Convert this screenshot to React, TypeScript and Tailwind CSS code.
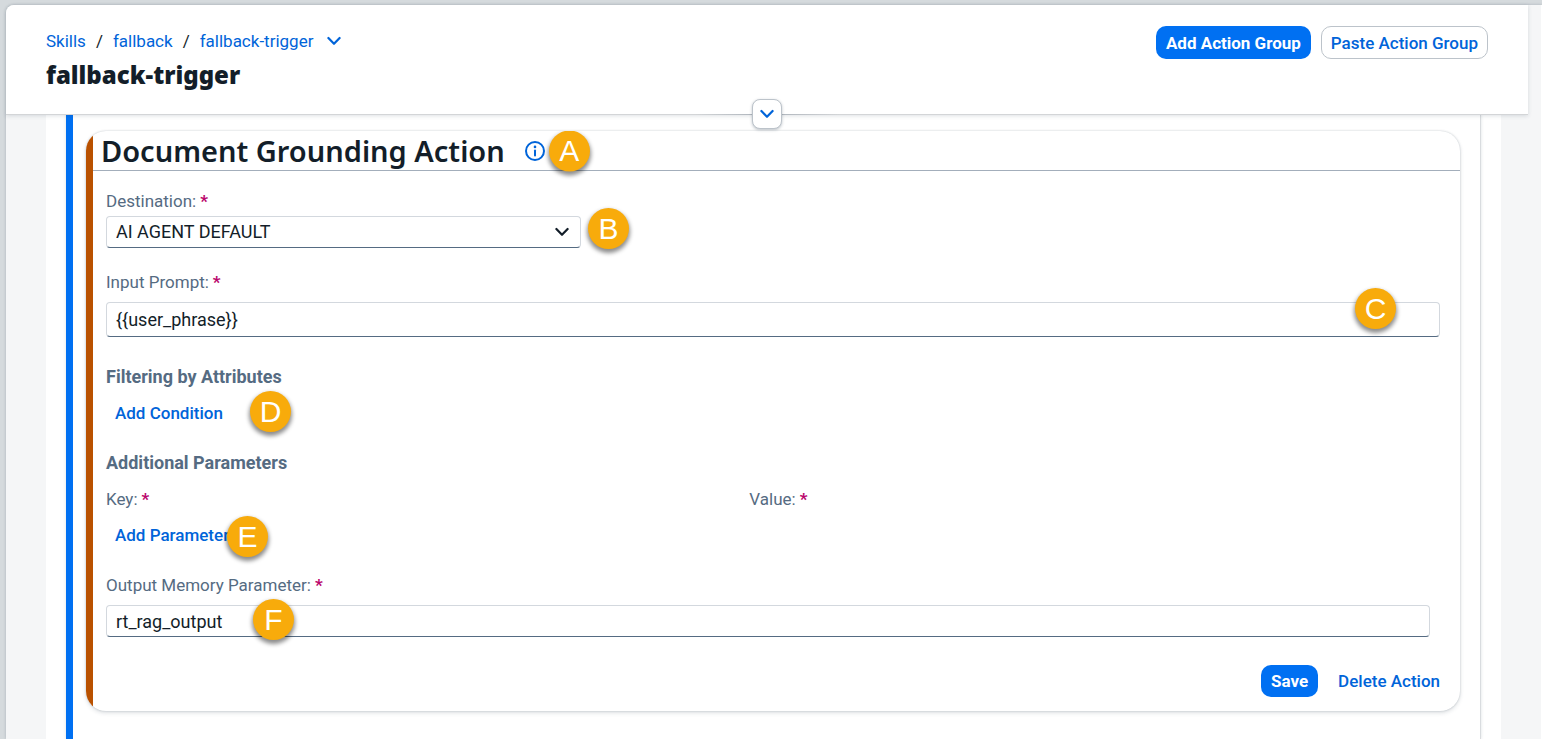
import { useState } from 'react'
import type { ReactNode } from 'react'
import clsx from 'clsx'

// Chevron shared by the breadcrumb, the header toggle and the select
function Chevron({ className }: { className?: string }) {
  return (
    <svg
      viewBox="0 0 14 14"
      className={clsx('h-3.5 w-3.5', className)}
      fill="none"
      stroke="currentColor"
      strokeWidth="2.2"
      strokeLinecap="round"
      strokeLinejoin="round"
      aria-hidden="true"
    >
      <path d="M1.4 4 L7 9.8 L12.6 4" />
    </svg>
  )
}

function InfoIcon() {
  return (
    <svg viewBox="0 0 20 20" className="h-5 w-5" fill="none" aria-hidden="true">
      <circle cx="10" cy="10" r="9" stroke="currentColor" strokeWidth="2" />
      <circle cx="10" cy="5.9" r="1.3" fill="currentColor" />
      <path d="M10 9.4 V14.6" stroke="currentColor" strokeWidth="2" strokeLinecap="round" />
    </svg>
  )
}

// Orange callout that floats over the form
function Callout({ letter, className }: { letter: string; className: string }) {
  return (
    <span
      className={clsx(
        'pointer-events-none absolute z-10 flex h-[41px] w-[41px] items-center justify-center rounded-full bg-[#f8ab0b] font-["Liberation_Sans",sans-serif] text-[30px] leading-none font-normal text-white shadow-[0_3px_4px_1px_rgba(0,0,0,0.45)]',
        className,
      )}
    >
      {letter}
    </span>
  )
}

function Label({ htmlFor, children }: { htmlFor?: string; children: ReactNode }) {
  const Tag = htmlFor ? 'label' : 'div'
  return (
    <Tag htmlFor={htmlFor} className="flex h-6 items-center gap-1 text-[17px] leading-6 text-[#556b82]">
      {children}
      <span className="font-bold text-[#ba066c]">*</span>
    </Tag>
  )
}

const field =
  'w-full rounded border border-[#d3d8de] border-b-[#556b82] bg-white px-[9px] text-[#131e29] outline-none'
const textButton = 'h-8 px-[9px] text-[17px] font-medium text-[#0064d9]'

function Header() {
  return (
    <header className="relative z-20 mr-[13px] flex items-start justify-between rounded-tl-lg border-b border-[#d3d5d7] bg-white pt-[21px] pr-10 pb-[23px] pl-10 shadow-[0_1px_4px_rgba(34,54,73,0.15)]">
      <div className="pt-[3px]">
        <nav
          className="flex h-6 items-center gap-2.5 text-[17px] text-[#0064d9]"
          aria-label="Breadcrumb"
        >
          <a href="#skills">Skills</a>
          <span className="text-[#131e29]">/</span>
          <a href="#fallback">fallback</a>
          <span className="text-[#131e29]">/</span>
          <a href="#fallback-trigger">fallback-trigger</a>
          <button type="button" className="ml-1" aria-label="More pages">
            <Chevron />
          </button>
        </nav>
        <h1 className='mt-1.5 font-["Noto_Sans",sans-serif] text-2xl font-black text-[#131e29]'>
          fallback-trigger
        </h1>
      </div>

      <div className="flex gap-2.5 text-[17px]">
        <button
          type="button"
          className="h-[33px] rounded-[10px] bg-[#0070f2] px-2.5 font-bold text-white"
        >
          Add Action Group
        </button>
        <button
          type="button"
          className="h-[33px] rounded-[10px] border border-[#bcc3ca] bg-white px-[9px] font-medium text-[#0064d9]"
        >
          Paste Action Group
        </button>
      </div>

      {/* Collapse toggle sits on the bottom edge */}
      <div className="absolute -bottom-px left-1/2 h-px w-36 -translate-x-1/2 bg-gradient-to-r from-transparent via-[#a9b0b8] to-transparent" />
      <button
        type="button"
        aria-label="Expand header"
        className="absolute -bottom-[15px] left-1/2 flex h-[30px] w-[30px] -translate-x-1/2 items-center justify-center rounded-lg border border-[#bcc3ca] bg-white text-[#0064d9] shadow-[0_1px_3px_rgba(34,54,73,0.3)]"
      >
        <Chevron />
      </button>
    </header>
  )
}

function ActionCard() {
  const [destination, setDestination] = useState('AI AGENT DEFAULT')
  const [prompt, setPrompt] = useState('{{user_phrase}}')
  const [output, setOutput] = useState('rt_rag_output')

  return (
    <section className="flex overflow-hidden rounded-[20px] bg-white shadow-[0_0_2px_rgba(34,54,73,0.25),0_2px_4px_rgba(34,54,73,0.15)]">
      <div className="w-[7px] shrink-0 bg-[#b95100]" />
      <div className="min-w-0 flex-1">
        <div className="flex h-10 items-center gap-5 border-b border-[#a3aebb] pl-2">
          <h2 className='font-["Noto_Sans",sans-serif] text-[29px] leading-none font-semibold text-[#131e29]'>
            Document Grounding Action
          </h2>
          <div className="relative flex">
            <button type="button" className="text-[#0064d9]" aria-label="About this action">
              <InfoIcon />
            </button>
            <Callout letter="A" className="top-1/2 left-6 -translate-y-1/2" />
          </div>
        </div>

        <form className="pt-[18px] pr-5 pb-[14px] pl-[13px]" onSubmit={(e) => e.preventDefault()}>
          <Label htmlFor="destination">Destination:</Label>
          <div className="relative mt-[3px] w-[475px]">
            <select
              id="destination"
              value={destination}
              onChange={(e) => setDestination(e.target.value)}
              className={clsx(field, 'block h-8 appearance-none')}
            >
              <option>AI AGENT DEFAULT</option>
            </select>
            <Chevron className="pointer-events-none absolute top-1/2 right-3 -translate-y-1/2 text-[#131e29]" />
            <Callout letter="B" className="-top-2 -right-12" />
          </div>

          <div className="mt-[22px]">
            <Label htmlFor="prompt">Input Prompt:</Label>
            <div className="relative mt-2">
              <input
                id="prompt"
                value={prompt}
                onChange={(e) => setPrompt(e.target.value)}
                className={clsx(field, 'block h-[35px]')}
              />
              <Callout letter="C" className="-top-3.5 right-11" />
            </div>
          </div>

          <h3 className="mt-7 h-6 leading-6 font-bold text-[#556b82]">Filtering by Attributes</h3>
          <div className="relative mt-2 flex w-fit">
            <button type="button" className={textButton}>
              Add Condition
            </button>
            <Callout letter="D" className="-top-1.5 left-36" />
          </div>

          <h3 className="mt-[22px] h-6 leading-6 font-bold text-[#556b82]">Additional Parameters</h3>
          <div className="mt-3 flex">
            <div className="w-[48%]">
              <Label>Key:</Label>
            </div>
            <div className="flex-1 pl-[3px]">
              <Label>Value:</Label>
            </div>
          </div>
          <div className="relative mt-2 flex w-fit">
            <button type="button" className={textButton}>
              Add Parameter
            </button>
            <Callout letter="E" className="-top-[3px] left-[121px]" />
          </div>

          <div className="mt-[22px]">
            <Label htmlFor="output">Output Memory Parameter:</Label>
            <div className="relative mt-2 pr-2.5">
              <input
                id="output"
                value={output}
                onChange={(e) => setOutput(e.target.value)}
                className={clsx(field, 'block h-8')}
              />
              <Callout letter="F" className="-top-1.5 left-[147px]" />
            </div>
          </div>

          <div className="mt-7 flex justify-end gap-5 text-[17px]">
            <button
              type="submit"
              className="h-8 rounded-[10px] bg-[#0070f2] px-2.5 font-bold text-white"
            >
              Save
            </button>
            <button type="button" className="h-8 font-medium text-[#0064d9]">
              Delete Action
            </button>
          </div>
        </form>
      </div>
    </section>
  )
}

export default function App() {
  return (
    <div className="flex min-h-screen bg-[#d5dadd] pt-[5px] pl-1.5 font-[Roboto,sans-serif] text-lg leading-6">
      <div className="flex flex-1 flex-col rounded-tl-lg border-r border-white bg-[#f5f6f7] shadow-[0_0_3px_rgba(34,54,73,0.25)]">
        <Header />
        <main className="mr-10 ml-10 flex flex-1 flex-col bg-white px-5">
          <div className="flex-1 border-r border-l-[7px] border-r-[#d9dcdf] border-l-[#0070f2] pt-4 pr-5 pb-7 pl-[13px] shadow-[0_0_3px_rgba(34,54,73,0.15)]">
            <ActionCard />
          </div>
        </main>
      </div>
    </div>
  )
}
